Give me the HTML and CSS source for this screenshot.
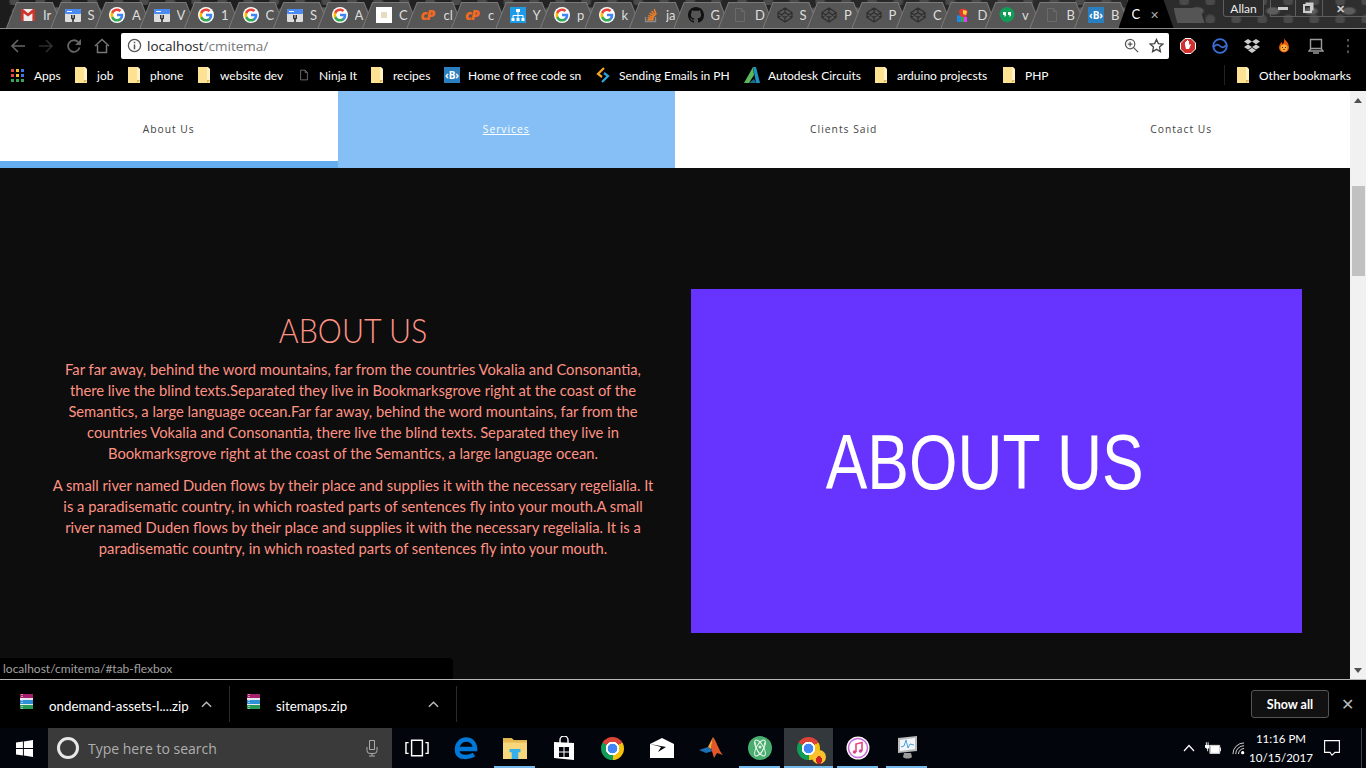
FILE: index.html
```html
<!DOCTYPE html>
<html lang="en">
<head>
    <meta charset="UTF-8">
    <meta name="viewport" content="width=device-width, initial-scale=1.0">
    <title>cmitema</title>
    <link rel="stylesheet" href="styles.css">
</head>
<body>
    <svg class="defs" width="0" height="0">
        <symbol id="g" viewBox="-2 -2 22 22">
            <circle cx="9" cy="9" r="11" fill="#fff"/>
            <path fill="#4285f4" d="M17.64 9.2c0-.637-.057-1.251-.164-1.84H9v3.481h4.844a4.14 4.14 0 0 1-1.796 2.716v2.259h2.908c1.702-1.567 2.684-3.875 2.684-6.615z"/>
            <path fill="#34a853" d="M9 18c2.43 0 4.467-.806 5.956-2.18l-2.908-2.259c-.806.54-1.837.86-3.048.86-2.344 0-4.328-1.584-5.036-3.711H.957v2.332A8.997 8.997 0 0 0 9 18z"/>
            <path fill="#fbbc05" d="M3.964 10.71A5.41 5.41 0 0 1 3.682 9c0-.593.102-1.17.282-1.71V4.958H.957A8.996 8.996 0 0 0 0 9c0 1.452.348 2.827.957 4.042l3.007-2.332z"/>
            <path fill="#ea4335" d="M9 3.58c1.321 0 2.508.454 3.44 1.345l2.582-2.58C13.463.891 11.426 0 9 0A8.997 8.997 0 0 0 .957 4.958L3.964 7.29C4.672 5.163 6.656 3.58 9 3.58z"/>
        </symbol>
        <symbol id="gmail" viewBox="0 0 16 16">
            <rect x="1" y="2" width="14" height="12" fill="#eee"/>
            <path fill="#d0352b" d="M1 2h2l5 4.2L13 2h2v12h-2.6V6.2L8 9.6 3.6 6.2V14H1z"/>
        </symbol>
        <symbol id="console" viewBox="0 0 16 16">
            <rect x="0" y="2" width="16" height="13" rx="1" fill="#ddd"/>
            <rect x="0" y="2" width="16" height="5" rx="1" fill="#4a8af4"/>
            <rect x="2" y="4" width="5" height="1" fill="#fff"/>
            <path fill="#333" d="M6 8h1.5v3h1V8H10v3.5l-1.2 1.2V15H7.2v-2.3L6 11.5z"/>
        </symbol>
        <symbol id="stack" viewBox="0 0 16 16">
            <path fill="none" stroke="#8c8c8c" stroke-width="1.3" d="M2.5 10v4.5h10V10"/>
            <path fill="none" stroke="#f48024" stroke-width="1.4" d="M4.5 12.8h6M4.7 10.8l6 .6M5.3 8.6l5.8 1.6M6.6 6.2l5.1 3M8.6 4l3.9 4.4M11.2 2l2 5.4"/>
        </symbol>
        <symbol id="github" viewBox="0 0 16 16">
            <path fill="#111" d="M8 0C3.58 0 0 3.58 0 8c0 3.54 2.29 6.53 5.47 7.59.4.07.55-.17.55-.4 0-.19-.01-.82-.01-1.49-2.01.37-2.53-.49-2.69-.94-.09-.23-.48-.94-.82-1.13-.28-.15-.68-.52-.01-.53.63-.01 1.08.58 1.23.82.72 1.21 1.87.87 2.33.66.07-.52.28-.87.51-1.07-1.78-.2-3.64-.89-3.64-3.95 0-.87.31-1.59.82-2.15-.08-.2-.36-1.02.08-2.12 0 0 .67-.21 2.2.82.64-.18 1.32-.27 2-.27.68 0 1.36.09 2 .27 1.53-1.04 2.2-.82 2.2-.82.44 1.1.16 1.92.08 2.12.51.56.82 1.27.82 2.15 0 3.07-1.87 3.75-3.65 3.95.29.25.54.73.54 1.48 0 1.07-.01 1.93-.01 2.2 0 .21.15.46.55.38A8.013 8.013 0 0 0 16 8c0-4.42-3.58-8-8-8z"/>
        </symbol>
        <symbol id="doc" viewBox="0 0 16 16">
            <path fill="none" stroke="currentColor" d="M3.5 1.5h6l3 3v10h-9zM9.5 1.5v3h3"/>
        </symbol>
        <symbol id="codepen" viewBox="0 0 16 16">
            <path fill="none" stroke="#2e2e2e" stroke-width="1.2" stroke-linejoin="round" d="M8 1l7 4.6v4.8L8 15l-7-4.6V5.600zM8 1v4.200M8 10.800V15M1 5.600l7 4.800 7-4.800M1 10.400l7-4.800 7 4.800"/>
        </symbol>
        <symbol id="folder" viewBox="0 0 12 16">
            <path fill="#fde293" d="M0 0h9v13h3v3H0z"/>
            <path fill="#fff3c4" d="M9 0h1l2 2v11H9z"/>
            <path fill="#d9b660" d="M9 13h3l-3 3z"/>
        </symbol>
        <symbol id="rar" viewBox="0 0 16 16">
            <rect x="1" y="0" width="13" height="4" fill="#a3206d"/>
            <rect x="1" y="4" width="13" height="2" fill="#e8e8f0"/>
            <rect x="1" y="6" width="13" height="4" fill="#2d8fd5"/>
            <rect x="1" y="10" width="13" height="1" fill="#e8e8f0"/>
            <rect x="1" y="11" width="13" height="4" fill="#2a9a57"/>
            <path stroke="#fff" stroke-dasharray="1 1" d="M3 0v15"/>
        </symbol>
    </svg>

    <div class="tabstrip">
        <div class="tab"><svg class="fav"><use href="#gmail"/></svg><span class="tab-title">Ir</span></div>
        <div class="tab"><svg class="fav"><use href="#console"/></svg><span class="tab-title">S</span></div>
        <div class="tab"><svg class="fav"><use href="#g"/></svg><span class="tab-title">A</span></div>
        <div class="tab"><svg class="fav"><use href="#console"/></svg><span class="tab-title">V</span></div>
        <div class="tab"><svg class="fav"><use href="#g"/></svg><span class="tab-title">1</span></div>
        <div class="tab"><svg class="fav"><use href="#g"/></svg><span class="tab-title">C</span></div>
        <div class="tab"><svg class="fav"><use href="#console"/></svg><span class="tab-title">S</span></div>
        <div class="tab"><svg class="fav"><use href="#g"/></svg><span class="tab-title">A</span></div>
        <div class="tab"><span class="fav fav-cream"></span><span class="tab-title">C</span></div>
        <div class="tab"><span class="fav fav-cp">cP</span><span class="tab-title">cl</span></div>
        <div class="tab"><span class="fav fav-cp">cP</span><span class="tab-title">c</span></div>
        <div class="tab"><svg class="fav" viewBox="0 0 16 16"><rect width="16" height="16" fill="#1e9be8"/><path fill="none" stroke="#fff" d="M8 5v3M3 11V8.500h10V11M8 8.500V11"/><rect x="6" y="2" width="4" height="3" fill="#fff"/><rect x="1.500" y="11" width="3" height="3" fill="#fff"/><rect x="6.500" y="11" width="3" height="3" fill="#fff"/><rect x="11.500" y="11" width="3" height="3" fill="#fff"/></svg><span class="tab-title">Y</span></div>
        <div class="tab"><svg class="fav"><use href="#g"/></svg><span class="tab-title">p</span></div>
        <div class="tab"><svg class="fav"><use href="#g"/></svg><span class="tab-title">k</span></div>
        <div class="tab"><svg class="fav"><use href="#stack"/></svg><span class="tab-title">ja</span></div>
        <div class="tab"><svg class="fav"><use href="#github"/></svg><span class="tab-title">G</span></div>
        <div class="tab"><svg class="fav fav-doc"><use href="#doc"/></svg><span class="tab-title">D</span></div>
        <div class="tab"><svg class="fav"><use href="#codepen"/></svg><span class="tab-title">S</span></div>
        <div class="tab"><svg class="fav"><use href="#codepen"/></svg><span class="tab-title">P</span></div>
        <div class="tab"><svg class="fav"><use href="#codepen"/></svg><span class="tab-title">P</span></div>
        <div class="tab"><svg class="fav"><use href="#codepen"/></svg><span class="tab-title">C</span></div>
        <div class="tab"><svg class="fav" viewBox="0 0 16 16"><path fill="#e53935" d="M4 4a5 5 0 0 1 9 1l-2 5H5z"/><path fill="#fdd835" d="M8 3l4 1-1 4-3-1z"/><path fill="#1e88e5" d="M2 8l4 1v6H2z"/><path fill="#43a047" d="M6 10h3v5H6z"/><path fill="#e040fb" d="M9 10h3v5H9z"/></svg><span class="tab-title">D</span></div>
        <div class="tab"><svg class="fav" viewBox="0 0 16 16"><circle cx="8" cy="7.500" r="7.500" fill="#0f9d58"/><path fill="#0f9d58" d="M7 13h4l-3 3z"/><path fill="#fff" d="M4 5h3v3.500L5.500 10V8H4zM9 5h3v3.500L10.500 10V8H9z"/></svg><span class="tab-title">v</span></div>
        <div class="tab"><svg class="fav fav-doc"><use href="#doc"/></svg><span class="tab-title">B</span></div>
        <div class="tab"><span class="fav fav-b">‹B›</span><span class="tab-title">B</span></div>
        <div class="tab tab-active"><span class="tab-title">C</span><span class="tab-close">✕</span></div>
        <div class="newtab"></div>
        <div class="window-btns">
            <div class="profile">Allan</div>
            <div class="win-btn"><span class="win-min"></span></div>
            <div class="win-btn win-btn-mid"><span class="win-restore"></span></div>
            <div class="win-btn win-close">✕</div>
        </div>
    </div>

    <div class="toolbar">
        <svg class="tool" viewBox="0 0 16 16"><path fill="none" stroke="#666" stroke-width="1.600" d="M15 8H2M8 2L2 8l6 6"/></svg>
        <svg class="tool" viewBox="0 0 16 16"><path fill="none" stroke="#2e2e2e" stroke-width="1.600" d="M1 8h13M8 2l6 6-6 6"/></svg>
        <svg class="tool" viewBox="0 0 16 16"><path fill="none" stroke="#666" stroke-width="1.800" d="M13.500 9.500A5.800 5.800 0 1 1 12 4"/><path fill="#666" d="M15 1v6H9z"/></svg>
        <svg class="tool" viewBox="0 0 16 16"><path fill="none" stroke="#777" stroke-width="1.500" d="M1 8l7-6.500L15 8M3.500 7v7.500h9V7"/></svg>
        <div class="omnibox">
            <svg class="omni-info" viewBox="0 0 16 16"><circle cx="8" cy="8" r="6.500" fill="none" stroke="#555" stroke-width="1.400"/><path stroke="#555" stroke-width="1.600" d="M8 7v5M8 4v1.600"/></svg>
            <span class="url">localhost<span class="url-path">/cmitema/</span></span>
            <svg class="omni-icon" viewBox="0 0 16 16"><circle cx="6.500" cy="6.500" r="5" fill="none" stroke="#555" stroke-width="1.300"/><path stroke="#555" stroke-width="1.300" d="M10 10l5 5M4 6.500h5M6.500 4v5"/></svg>
            <svg class="omni-icon" viewBox="0 0 16 16"><path fill="none" stroke="#444" stroke-width="1.400" d="M8 1.500l2 4.500 4.800.5-3.600 3.200 1 4.800L8 12.100l-4.200 2.400 1-4.800L1.200 6.500 6 6z"/></svg>
        </div>
        <div class="extensions">
            <svg class="ext" viewBox="0 0 16 16"><path fill="#d32f2f" stroke="#fff" d="M5 .5h6L15.500 5v6L11 15.500H5L.5 11V5z"/><path fill="#fff" d="M5 7V4h1v2-3h1v3-4h1v4-3h1v4l1-1 1 .5-2 4.500H6z"/></svg>
            <svg class="ext" viewBox="0 0 16 16"><circle cx="8" cy="8" r="6.800" fill="none" stroke="#3b6fd8" stroke-width="1.800"/><path fill="none" stroke="#3b6fd8" stroke-width="1.600" d="M2 9c2-3 4-3 6-1s4 2 6-1"/></svg>
            <svg class="ext" viewBox="0 0 16 16"><path fill="#ccc" d="M4 1l4 2.600L4 6.200 0 3.600zM12 1l4 2.600-4 2.600-4-2.600zM4 6.400L8 9l-4 2.600L0 9zM12 6.400L16 9l-4 2.600L8 9zM4 12.300l4-2.500 4 2.500-4 2.700z"/></svg>
            <svg class="ext" viewBox="0 0 16 16"><path fill="#e8590c" d="M8 0c1 3 5 4 5 9.500a5 5 0 0 1-10 0C3 7 5 6 5 4c1 .500 1.500 1.500 1.500 2.500C8 5 8.500 3 8 0z"/><circle cx="8" cy="10" r="3.500" fill="#fbb034"/><path fill="#421" d="M6 9h1v1H6zM9 9h1v1H9zM6.500 11h3l-1.500 1z"/></svg>
            <svg class="ext" viewBox="0 0 16 16"><path fill="none" stroke="#9a9a9a" stroke-width="1.400" d="M2.500 1.500h11v9h-11zM1 13h14l-2-2.500H3zM5 15h6"/></svg>
            <svg class="ext" viewBox="0 0 16 16"><path fill="#555" d="M7 1h2v2.500H7zM7 6.800h2v2.500H7zM7 12.500h2V15H7z"/></svg>
        </div>
    </div>

    <div class="bookmarks">
        <div class="bm"><span class="bm-apps"><i></i><i></i><i></i><i></i><i></i><i></i><i></i><i></i><i></i></span>Apps</div>
        <div class="bm"><svg class="bm-folder"><use href="#folder"/></svg>job</div>
        <div class="bm"><svg class="bm-folder"><use href="#folder"/></svg>phone</div>
        <div class="bm"><svg class="bm-folder"><use href="#folder"/></svg>website dev</div>
        <div class="bm"><svg class="bm-doc"><use href="#doc"/></svg>Ninja It</div>
        <div class="bm"><svg class="bm-folder"><use href="#folder"/></svg>recipes</div>
        <div class="bm"><span class="fav-b bm-b">‹B›</span>Home of free code sn</div>
        <div class="bm"><svg class="bm-icon" viewBox="0 0 16 16"><path fill="none" stroke="#f4a428" stroke-width="2.200" d="M9 1L3 7l4 3"/><path fill="none" stroke="#2ea6e0" stroke-width="2.200" d="M7 15l6-6-4-3"/></svg>Sending Emails in PH</div>
        <div class="bm"><svg class="bm-icon" viewBox="0 0 16 16"><path fill="#1d91c0" d="M9 0h3l4 16h-4z"/><path fill="#5cb85c" d="M9 0L0 16h5l5-8z"/><path fill="#1f6e8c" d="M5 16l5-4 2 4z"/></svg>Autodesk Circuits</div>
        <div class="bm"><svg class="bm-folder"><use href="#folder"/></svg>arduino projecsts</div>
        <div class="bm"><svg class="bm-folder"><use href="#folder"/></svg>PHP</div>
        <div class="bm-sep"></div>
        <div class="bm"><svg class="bm-folder"><use href="#folder"/></svg>Other bookmarks</div>
    </div>

    <div class="viewport">
        <div class="page">
            <nav class="page-nav">
                <a class="nav-item nav-first" href="#about">About Us</a>
                <a class="nav-item nav-current" href="#tab-flexbox">Services</a>
                <a class="nav-item" href="#clients">Clients Said</a>
                <a class="nav-item" href="#contact">Contact Us</a>
            </nav>
            <section class="about">
                <div class="about-text">
                    <h2>ABOUT US</h2>
                    <p>Far far away, behind the word mountains, far from the countries Vokalia and Consonantia,<br>there live the blind texts.Separated they live in Bookmarksgrove right at the coast of the<br>Semantics, a large language ocean.Far far away, behind the word mountains, far from the<br>countries Vokalia and Consonantia, there live the blind texts. Separated they live in<br>Bookmarksgrove right at the coast of the Semantics, a large language ocean.</p>
                    <p>A small river named Duden flows by their place and supplies it with the necessary regelialia. It<br>is a paradisematic country, in which roasted parts of sentences fly into your mouth.A small<br>river named Duden flows by their place and supplies it with the necessary regelialia. It is a<br>paradisematic country, in which roasted parts of sentences fly into your mouth.</p>
                </div>
                <div class="about-pic"><span>ABOUT US</span></div>
            </section>
        </div>
        <div class="scrollbar">
            <span class="arrow-up"></span>
            <span class="thumb"></span>
            <span class="arrow-down"></span>
        </div>
        <div class="status">localhost/cmitema/#tab-flexbox</div>
    </div>

    <div class="downloads">
        <div class="dl"><svg class="dl-icon"><use href="#rar"/></svg><span class="dl-name">ondemand-assets-l....zip</span><svg class="dl-caret" viewBox="0 0 12 8"><path fill="none" stroke="#bbb" stroke-width="1.600" d="M1 7l5-5 5 5"/></svg></div>
        <div class="dl"><svg class="dl-icon"><use href="#rar"/></svg><span class="dl-name">sitemaps.zip</span><svg class="dl-caret" viewBox="0 0 12 8"><path fill="none" stroke="#bbb" stroke-width="1.600" d="M1 7l5-5 5 5"/></svg></div>
        <button class="show-all">Show all</button>
        <span class="dl-close">✕</span>
    </div>

    <div class="taskbar">
        <div class="start">
            <svg viewBox="0 0 16 16"><path fill="#fff" d="M0 2.300l6.500-.9v6.200H0zM7.400 1.300L16 0v7.600H7.400zM0 8.500h6.500v6.200L0 13.700zM7.400 8.500H16V16l-8.600-1.300z"/></svg>
        </div>
        <div class="search">
            <span class="cortana"></span>
            <span class="search-text">Type here to search</span>
            <svg class="mic" viewBox="0 0 12 18"><path fill="none" stroke="#aaa" d="M3.500 1.500h5v9h-5zM1 8v3.500a3 3 0 0 0 3 3h4a3 3 0 0 0 3-3V8M6 14.500V17M3 17h6"/></svg>
        </div>
        <div class="task"><svg class="task-icon" viewBox="0 0 20 16"><path fill="none" stroke="#fff" stroke-width="1.200" d="M5.500 1.500h9v13h-9zM3 3.500H.8v9H3M17 3.500h2.200v9H17"/></svg></div>
        <div class="task"><svg class="task-icon" viewBox="0 0 24 24"><path fill="none" stroke="#0078d7" stroke-width="4.500" d="M3 13h18c0-6-4-9.500-9-9.500S3 8 3 13.500 7 21 12 21c3.500 0 6-1 8-2.500"/></svg></div>
        <div class="task task-open"><svg class="task-icon" viewBox="0 0 22 20"><path fill="#f6d77c" d="M0 1h8l2 2h12v17H0z"/><path fill="#e8b94c" d="M0 1h8l2 2h12v2H0z"/><path fill="#36b0e8" d="M6 11h10v3h-2v6h-6v-6H6z"/></svg></div>
        <div class="task"><svg class="task-icon" viewBox="0 0 22 24"><path fill="none" stroke="#fff" stroke-width="1.400" d="M7 7V4a4 4 0 0 1 8 0v3"/><path fill="#fff" d="M1 6l20 1v17L1 22z"/><path fill="#02060c" d="M6 11h4.500v4.500H6zM11.500 11H16v4.500h-4.500zM6 16.500h4.500V21H6zM11.500 16.500H16V21h-4.500z"/></svg></div>
        <div class="task"><span class="chrome"></span></div>
        <div class="task"><svg class="task-icon" viewBox="0 0 24 20"><path fill="#fff" d="M0 6l12-6 12 6v14H0z"/><path fill="#02060c" d="M0 6l16 3-8 5 3-5z"/></svg></div>
        <div class="task"><svg class="task-icon" viewBox="0 0 24 24"><path fill="#1b6fb5" d="M0 14l9-3 5 4-7 2z"/><path fill="#e2562a" d="M14 1c3 3 6 14 10 18l-6-2-3 5-3-10z"/><path fill="#f6a440" d="M14 1l-5 10 3 2z"/></svg></div>
        <div class="task task-open"><svg class="task-icon" viewBox="0 0 24 24"><circle cx="12" cy="12" r="12" fill="#48ad6f"/><g fill="none" stroke="#e4f5e8" stroke-width="1"><ellipse cx="12" cy="12" rx="9" ry="3.500" transform="rotate(60 12 12)"/><ellipse cx="12" cy="12" rx="9" ry="3.500" transform="rotate(-60 12 12)"/><path d="M7 6c1 5 2 9 5 13 3-4 4-8 5-13"/></g><circle cx="12" cy="11" r="1.500" fill="#e4f5e8"/></svg></div>
        <div class="task task-open task-active"><span class="chrome"></span><span class="emoji"></span></div>
        <div class="task task-open"><svg class="task-icon" viewBox="0 0 24 24"><circle cx="12" cy="12" r="11.500" fill="#fff"/><circle cx="12" cy="12" r="9.500" fill="none" stroke="#c86ad8" stroke-width="1.500"/><path fill="none" stroke="#e8457a" stroke-width="1.600" d="M10 16V8l6-1.500V15"/><circle cx="8.500" cy="16" r="1.800" fill="#e8457a"/><circle cx="14.500" cy="15" r="1.800" fill="#d04ca0"/></svg></div>
        <div class="task task-open"><svg class="task-icon" viewBox="0 0 24 24"><path fill="#bbb" d="M3 2l19-2v15L3 17z"/><path fill="#f2f6fa" d="M5 4l15-2v11L5 15z"/><path fill="none" stroke="#4aa0d8" d="M6 11l3-1 2-6 2 8 2-4 4 1"/><path fill="#999" d="M9 17h7l1 4c-2 2-7 2-9 0z"/></svg></div>
        <div class="tray">
            <svg class="tray-caret" viewBox="0 0 12 8"><path fill="none" stroke="#fff" stroke-width="1.200" d="M1 7l5-5.500L11 7"/></svg>
            <svg class="tray-power" viewBox="0 0 18 14"><path fill="#fff" d="M6 4h10v8H6z"/><path fill="none" stroke="#fff" d="M5.500 3.500h11v9h-11z"/><path fill="#fff" d="M17 6h1v4h-1zM0 3h5v3l-1.500 1.500V10h-1V7.500L0 6zM1 0h1v3H1zM3 0h1v3H3z"/></svg>
            <svg class="tray-wifi" viewBox="0 0 14 14"><path fill="none" stroke="#ddd" d="M1 13A12 12 0 0 1 13 1M4 13a9 9 0 0 1 9-9M7 13a6 6 0 0 1 6-6"/><circle cx="11.500" cy="11.500" r="1.800" fill="#fff"/></svg>
            <div class="clock">11:16 PM<br>10/15/2017</div>
            <svg class="tray-note" viewBox="0 0 16 16"><path fill="none" stroke="#fff" stroke-width="1.100" d="M.6.600h14.800v11.800H11L8 15.200 6 12.400H.6z"/></svg>
            <span class="show-desktop"></span>
        </div>
    </div>
</body>
</html>
```

FILE: styles.css
```css
* {
    box-sizing: border-box;
}

body {
    margin: 0;
    width: 1366px;
    height: 768px;
    display: flex;
    flex-direction: column;
    overflow: hidden;
    background: #000;
    font-family: "Open Sans", "Noto Sans", sans-serif;
}

.defs {
    position: absolute;
}

/* tab strip */
.tabstrip {
    height: 29px;
    flex: none;
    display: flex;
    padding-left: 6px;
    border-bottom: 1px solid #8a8a8a;
    background:
        radial-gradient(ellipse at 50% 50%, #5d5d5d 0 18%, transparent 30%) 0 0 / 38px 22px,
        radial-gradient(circle at 20% 80%, #4a4a4a 0 14%, transparent 24%) 9px 5px / 26px 18px,
        linear-gradient(120deg, #1c1c1c, #2f2f2f);
}

.tab {
    position: relative;
    width: 57px;
    height: 26px;
    margin-top: 2px;
    margin-right: -12.500px;
    padding-left: 14px;
    flex: none;
    display: flex;
    align-items: center;
    background: #7a7a7a;
    clip-path: polygon(0 100%, 18% 0, 82% 0, 100% 100%);
}

.tab::before {
    content: "";
    position: absolute;
    inset: 1px 1px 0;
    background: #565656;
    clip-path: polygon(0 100%, 18% 0, 82% 0, 100% 100%);
}

.fav {
    position: relative;
    width: 16px;
    height: 16px;
    flex: none;
}

.fav-doc {
    color: #6a6a6a;
}

.fav-cream {
    background: #fff;
    box-shadow: inset 0 0 0 5px #fff, inset 0 0 0 8px #e8dcc0;
}

.fav-cp {
    font: italic 800 14px/16px "Open Sans", sans-serif;
    letter-spacing: -1px;
    color: #f26a21;
}

.fav-b {
    background: #2a7fc1;
    color: #fff;
    font: 700 10px/16px "Open Sans", sans-serif;
    text-align: center;
}

.tab-title {
    position: relative;
    width: 11px;
    margin-left: 7px;
    overflow: hidden;
    font-family: Lato, sans-serif;
    font-size: 13px;
    color: #ddd;
}

.tab-active {
    width: 55px;
    height: 28px;
    margin-top: 0;
    margin-right: 0;
    padding-left: 13px;
    background: #000;
}

.tab-active::before {
    background: #000;
}

.tab-active .tab-title {
    margin-left: 0;
    color: #fff;
}

.tab-close {
    position: relative;
    margin-left: 7px;
    font-size: 11px;
    color: #aaa;
}

.newtab {
    width: 31px;
    height: 15px;
    margin-top: 8px;
    background: #555;
    clip-path: polygon(0 0, 85% 0, 100% 100%, 12% 100%);
}

.window-btns {
    margin-left: auto;
    height: 17px;
    display: flex;
    color: #eee;
}

.profile {
    width: 41px;
    margin-right: 6px;
    border: 1px solid #5e5e5e;
    border-top: 0;
    border-radius: 0 0 3px 3px;
    font-family: Lato, sans-serif;
    font-size: 12px;
    line-height: 17px;
    text-align: center;
    background: #2b2b2b;
}

.win-btn {
    width: 25px;
    display: flex;
    align-items: center;
    justify-content: center;
    border-left: 1px solid #5e5e5e;
    border-bottom: 1px solid #5e5e5e;
}

.win-btn-mid {
    width: 27px;
    padding-right: 3px;
}

.win-close {
    width: 44px;
    padding-right: 8px;
    font-size: 11px;
    font-weight: 700;
    color: #ccc;
}

.win-min {
    width: 10px;
    height: 3px;
    background: #ccc;
}

.win-restore {
    width: 9px;
    height: 9px;
    border: 2px solid #ccc;
    box-shadow: 2px -2px 0 -0.500px #ccc;
}

/* toolbar */
.toolbar {
    height: 33px;
    flex: none;
    display: flex;
    align-items: center;
    padding-left: 10px;
}

.tool {
    width: 16px;
    height: 16px;
    margin-right: 12px;
    flex: none;
}

.omnibox {
    width: 1048px;
    height: 26px;
    margin-left: -1px;
    padding: 0 5px 0 6px;
    display: flex;
    align-items: center;
    background: #fff;
    border-radius: 2px;
}

.omni-info {
    width: 15px;
    height: 15px;
}

.url {
    margin-left: 5px;
    margin-right: auto;
    font-size: 13.500px;
    color: #222;
}

.url-path {
    color: #777;
}

.omni-icon {
    width: 15px;
    height: 15px;
    margin-left: 10px;
}

.extensions {
    display: flex;
    margin-left: 11px;
    gap: 16px;
}

.ext {
    width: 16px;
    height: 16px;
}

/* bookmarks */
.bookmarks {
    height: 29px;
    flex: none;
    display: grid;
    grid-template-columns: 64px 53px 70px 100px 73px 73px 151px 149px 131px 128px 221px 13px auto;
    align-items: center;
    padding-left: 11px;
    padding-bottom: 3px;
}

.bm {
    display: flex;
    align-items: center;
    min-width: 0;
    font-family: Lato, sans-serif;
    font-size: 12px;
    color: #fff;
    white-space: nowrap;
}

.bm-apps {
    width: 13px;
    height: 13px;
    margin-right: 10px;
    flex: none;
    display: grid;
    grid-template-columns: repeat(3, 3px);
    gap: 2px;
}

.bm-apps i:nth-child(3n+1) {
    background: #e8453c;
}

.bm-apps i:nth-child(3n+2) {
    background: #f9bb2d;
}

.bm-apps i:nth-child(3n) {
    background: #3b79e6;
}

.bm-apps i:nth-child(n+7) {
    background: #34a853;
}

.bm-folder {
    width: 12px;
    height: 16px;
    margin-right: 10px;
    flex: none;
}

.bm-doc {
    width: 12px;
    height: 16px;
    margin-right: 9px;
    flex: none;
    color: #8a8a8a;
}

.bm-b {
    width: 16px;
    height: 16px;
    margin-right: 8px;
    flex: none;
}

.bm-icon {
    width: 16px;
    height: 16px;
    margin-right: 8px;
    flex: none;
}

.bm-sep {
    width: 1px;
    height: 20px;
    background: #222;
}

/* page */
.viewport {
    position: relative;
    height: 588px;
    flex: none;
    display: flex;
}

.page {
    flex: 1;
    min-width: 0;
    display: flex;
    flex-direction: column;
}

.page-nav {
    height: 77px;
    flex: none;
    display: grid;
    grid-template-columns: repeat(4, 1fr);
    background: #fff;
}

.nav-item {
    display: flex;
    align-items: center;
    justify-content: center;
    padding-bottom: 2px;
    font-size: 10.300px;
    letter-spacing: 1px;
    color: #444;
    text-decoration: none;
}

.nav-first {
    border-bottom: 7px solid #64aeef;
    padding-top: 5px;
    padding-bottom: 0;
}

.nav-current {
    background: #85bff5;
    color: #fff;
    text-decoration: underline;
}

.about {
    flex: 1;
    display: grid;
    grid-template-columns: 632px 611px;
    column-gap: 22px;
    align-items: start;
    padding: 121px 0 0 37px;
    background: #0d0d0d;
}

.about-text {
    padding: 21px 15px 0;
    text-align: center;
    color: #ff9284;
    font-family: Lato, sans-serif;
}

.about-text h2 {
    margin: 0 0 9px;
    font-size: 33px;
    line-height: 40px;
    font-weight: 300;
    transform: scaleX(0.92);
}

.about-text p {
    margin: 0 0 11px;
    font-size: 14.750px;
    line-height: 21px;
    white-space: nowrap;
}

.about-pic {
    height: 344px;
    padding-right: 24px;
    padding-top: 3px;
    display: flex;
    align-items: center;
    justify-content: center;
    background: #6633ff;
    color: #fff;
}

.about-pic span {
    display: inline-block;
    font-family: "Liberation Sans", sans-serif;
    font-size: 78px;
    transform: scaleX(0.8);
    white-space: nowrap;
}

.scrollbar {
    position: relative;
    width: 16px;
    flex: none;
    display: flex;
    flex-direction: column;
    align-items: center;
    padding-top: 7px;
    background: #f1f1f1;
}

.arrow-up {
    border: 4px solid transparent;
    border-top: 0;
    border-bottom: 5px solid #505050;
}

.thumb {
    width: 13px;
    height: 90px;
    margin-top: 83px;
    background: #c1c1c1;
}

.arrow-down {
    margin-top: auto;
    margin-bottom: 6px;
    border: 4px solid transparent;
    border-bottom: 0;
    border-top: 5px solid #505050;
}

.status {
    position: absolute;
    left: 0;
    bottom: 0;
    width: 453px;
    height: 21px;
    padding-left: 3px;
    background: #000;
    border-top-right-radius: 4px;
    font-family: Lato, sans-serif;
    font-size: 12px;
    line-height: 22px;
    color: #a0a0a0;
}

/* download shelf */
.downloads {
    height: 49px;
    flex: none;
    display: flex;
    align-items: center;
    padding-left: 18px;
    border-top: 1px solid #b5b5b5;
}

.dl {
    width: 212px;
    height: 36px;
    display: flex;
    align-items: center;
    padding-left: 1px;
    border-right: 1px solid #2a2a2a;
}

.dl + .dl {
    width: 227px;
    padding-left: 16px;
}

.dl-icon {
    width: 16px;
    height: 16px;
    margin-top: -4px;
    flex: none;
}

.dl-name {
    margin-left: 14px;
    margin-right: auto;
    margin-top: 4px;
    font-family: Lato, sans-serif;
    font-size: 13.300px;
    color: #fff;
}

.dl-caret {
    width: 11px;
    height: 8px;
    margin-right: 17px;
}

.show-all {
    width: 78px;
    height: 28px;
    margin-left: auto;
    border: 1px solid #555;
    border-radius: 3px;
    background: #111;
    font: 700 12.500px Lato, sans-serif;
    color: #fff;
}

.dl-close {
    width: 37px;
    font-size: 16px;
    text-align: center;
    color: #bbb;
}

/* taskbar */
.taskbar {
    height: 40px;
    flex: none;
    display: flex;
    background: #02060c;
}

.start {
    width: 48px;
    flex: none;
    display: flex;
    align-items: center;
    justify-content: center;
}

.start svg {
    width: 17px;
    height: 17px;
}

.search {
    width: 344px;
    flex: none;
    display: flex;
    align-items: center;
    padding: 0 14px 0 9px;
    background: #3a3a3a;
}

.cortana {
    width: 22px;
    height: 22px;
    flex: none;
    border: 3px solid #e8e8e8;
    border-radius: 50%;
}

.search-text {
    margin-left: 9px;
    margin-right: auto;
    font-size: 14px;
    color: #aeaeae;
}

.mic {
    width: 12px;
    height: 18px;
}

.task {
    position: relative;
    width: 49px;
    flex: none;
    display: flex;
    align-items: center;
    justify-content: center;
}

.task-icon {
    width: 24px;
    height: 24px;
}

.task-open::after {
    content: "";
    position: absolute;
    left: 4px;
    right: 4px;
    bottom: 0;
    height: 2px;
    background: #76b9ed;
}

.task-active {
    background: #33383d;
}

.task-active::after {
    left: 0;
    right: 0;
}

.chrome {
    width: 23px;
    height: 23px;
    border-radius: 50%;
    background:
        radial-gradient(circle, #4285f4 0 30%, #fff 31% 41%, transparent 42%),
        conic-gradient(#db4437 0 60deg, #f4c20d 60deg 180deg, #0f9d58 180deg 300deg, #db4437 300deg);
}

.emoji {
    position: absolute;
    right: 7px;
    bottom: 4px;
    width: 14px;
    height: 14px;
    border-radius: 50%;
    background: radial-gradient(ellipse at 50% 72%, #c22 0 28%, transparent 30%), #fbc02d;
}

.tray {
    flex: 1;
    min-width: 0;
    display: flex;
    align-items: center;
    padding-left: 252px;
    color: #fff;
}

.tray-caret {
    width: 12px;
    height: 8px;
    flex: none;
}

.tray-power {
    width: 16px;
    height: 13px;
    margin-left: 10px;
    flex: none;
}

.tray-wifi {
    width: 13px;
    height: 13px;
    margin-left: 11px;
    flex: none;
}

.clock {
    width: 70px;
    margin-left: 1px;
    flex: none;
    font-family: Lato, sans-serif;
    font-size: 11.500px;
    line-height: 19px;
    text-align: center;
}

.tray-note {
    width: 16px;
    height: 16px;
    margin-left: 8px;
    flex: none;
}

.show-desktop {
    width: 1px;
    height: 40px;
    margin-left: 21px;
    flex: none;
    background: #444;
}
```
